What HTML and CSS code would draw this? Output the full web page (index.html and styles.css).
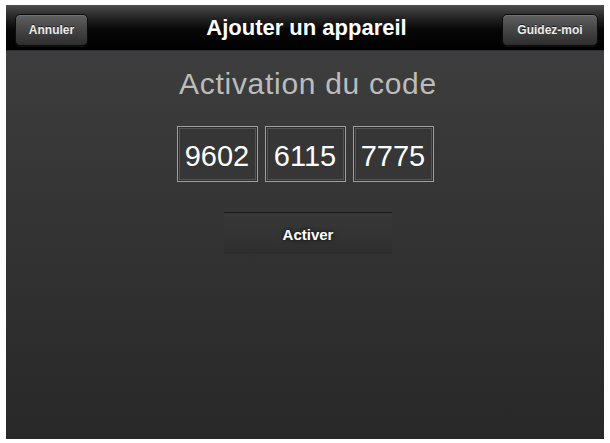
FILE: index.html
```html
<!DOCTYPE html>
<html lang="fr">
<head>
<meta charset="utf-8">
<title>Ajouter un appareil</title>
<link rel="stylesheet" href="styles.css">
</head>
<body>
<div class="screen">
  <header class="navbar">
    <div class="nav-side">
      <button class="nav-btn btn-left">Annuler</button>
    </div>
    <h1 class="nav-title">Ajouter un appareil</h1>
    <div class="nav-side side-right">
      <button class="nav-btn btn-right">Guidez-moi</button>
    </div>
  </header>
  <main class="content">
    <h2 class="heading">Activation du code</h2>
    <div class="codes">
      <div class="code-box">9602</div>
      <div class="code-box">6115</div>
      <div class="code-box">7775</div>
    </div>
    <button class="activate">Activer</button>
  </main>
</div>
</body>
</html>
```

FILE: styles.css
```css
html, body {
  margin: 0;
  padding: 0;
  background: #ffffff;
}
body {
  width: 610px;
  height: 443px;
  overflow: hidden;
  font-family: "Liberation Sans", Arial, sans-serif;
}
.screen {
  margin: 5px 6px 0 6px;
  width: 598px;
  height: 434px;
  display: flex;
  flex-direction: column;
  background: linear-gradient(to bottom, #404040 0%, #363636 40%, #282828 100%);
}
.navbar {
  height: 46px;
  flex: 0 0 46px;
  display: grid;
  grid-template-columns: 1fr auto 1fr;
  align-items: center;
  padding: 0 6px 0 9px;
  box-sizing: border-box;
  background: linear-gradient(to bottom, #4c4c4c 0%, #222 30%, #070707 55%, #000 100%);
  border-bottom: 1px solid #2b2b33;
}
.nav-side {
  display: flex;
}
.side-right {
  justify-content: flex-end;
}
.nav-title {
  margin: 0;
  font-size: 22px;
  font-weight: bold;
  color: #ffffff;
  padding-top: 1px;
}
.nav-btn {
  height: 32px;
  margin-top: 4px;
  border: 1px solid #0c0c0c;
  border-radius: 5px;
  background: linear-gradient(to bottom, #606060 0%, #444 50%, #2e2e2e 100%);
  box-shadow: inset 0 1px 0 rgba(255,255,255,0.12), 0 1px 0 rgba(255,255,255,0.06);
  color: #ececec;
  font-family: "Liberation Sans", Arial, sans-serif;
  font-size: 12px;
  font-weight: bold;
  padding: 0;
  text-shadow: 0 -1px 0 rgba(0,0,0,0.6);
}
.btn-left { width: 73px; }
.btn-right { width: 96px; }
.content {
  flex: 1;
  display: flex;
  flex-direction: column;
  align-items: center;
  padding-top: 16px;
}
.heading {
  margin: 0;
  font-size: 30px;
  line-height: 34px;
  font-weight: normal;
  color: #bcbcbc;
  letter-spacing: 0.7px;
  padding-left: 6px;
}
.codes {
  display: flex;
  gap: 7px;
  margin-top: 25px;
}
.code-box {
  width: 81px;
  height: 56px;
  box-sizing: border-box;
  border: 1px solid #a0a0a0;
  box-shadow: inset 0 0 0 1px #2e2e2e, inset 0 0 0 2px #555;
  background: #363636;
  color: #ffffff;
  font-size: 29px;
  display: flex;
  align-items: center;
  justify-content: center;
  padding-top: 4px;
}
.activate {
  margin-top: 30px;
  width: 168px;
  height: 42px;
  border: none;
  border-top: 1px solid #1a1a1a;
  background: linear-gradient(to bottom, rgba(255,255,255,0.02) 0%, rgba(0,0,0,0.0) 60%, rgba(0,0,0,0.1) 100%);
  color: #ffffff;
  font-family: "Liberation Sans", Arial, sans-serif;
  font-size: 15px;
  font-weight: bold;
  padding: 2px 0 0 0;
  margin-left: 6px;
  text-shadow: 0 0 4px rgba(0,0,0,0.9);
}
```
